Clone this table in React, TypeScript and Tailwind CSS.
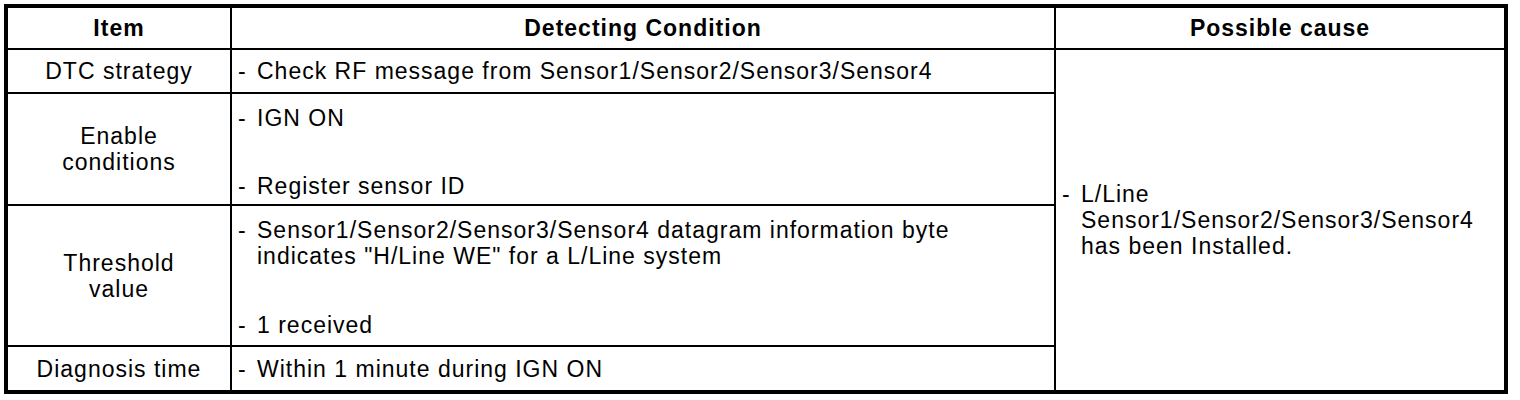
import React from 'react';

const Bullet: React.FC<{ children: React.ReactNode; className?: string }> = ({ children, className }) => (
  <div className={`flex ${className ?? ''}`}>
    <span className="w-[19px] flex-none">-</span>
    <span>{children}</span>
  </div>
);

export default function App() {
  return (
    <div className="h-[400px] w-[1520px] bg-white p-[4px] font-['Liberation_Sans',Arial,sans-serif] text-[23px] leading-[26px] tracking-[1px] text-black">
      <div className="grid w-[1504px] grid-cols-[222px_822px_448px] grid-rows-[40px_42px_110px_139px_43px] gap-[2px] border-[4px] border-black bg-black">
        {/* header */}
        <div className="flex items-center justify-center bg-white font-bold">Item</div>
        <div className="flex items-center justify-center bg-white font-bold">Detecting Condition</div>
        <div className="flex items-center justify-center bg-white font-bold">Possible cause</div>

        {/* DTC strategy */}
        <div className="flex items-center justify-center bg-white text-center">DTC strategy</div>
        <div className="flex items-center bg-white pl-[6px]">
          <Bullet>Check RF message from Sensor1/Sensor2/Sensor3/Sensor4</Bullet>
        </div>
        <div className="row-span-4 flex items-center bg-white pl-[6px] pr-[10px]">
          <Bullet>
            L/Line
            <br />
            Sensor1/Sensor2/Sensor3/Sensor4
            <br />
            has been Installed.
          </Bullet>
        </div>

        {/* Enable conditions */}
        <div className="flex items-center justify-center bg-white text-center">
          Enable
          <br />
          conditions
        </div>
        <div className="bg-white pl-[6px] pt-[11px]">
          <Bullet>IGN ON</Bullet>
          <Bullet className="mt-[42px]">Register sensor ID</Bullet>
        </div>

        {/* Threshold value */}
        <div className="flex items-center justify-center bg-white text-center">
          Threshold
          <br />
          value
        </div>
        <div className="bg-white pl-[6px] pt-[11px]">
          <Bullet>
            Sensor1/Sensor2/Sensor3/Sensor4 datagram information byte
            <br />
            indicates "H/Line WE" for a L/Line system
          </Bullet>
          <Bullet className="mt-[43px]">1 received</Bullet>
        </div>

        {/* Diagnosis time */}
        <div className="flex items-center justify-center bg-white text-center">Diagnosis time</div>
        <div className="flex items-center bg-white pl-[6px]">
          <Bullet>Within 1 minute during IGN ON</Bullet>
        </div>
      </div>
    </div>
  );
}
